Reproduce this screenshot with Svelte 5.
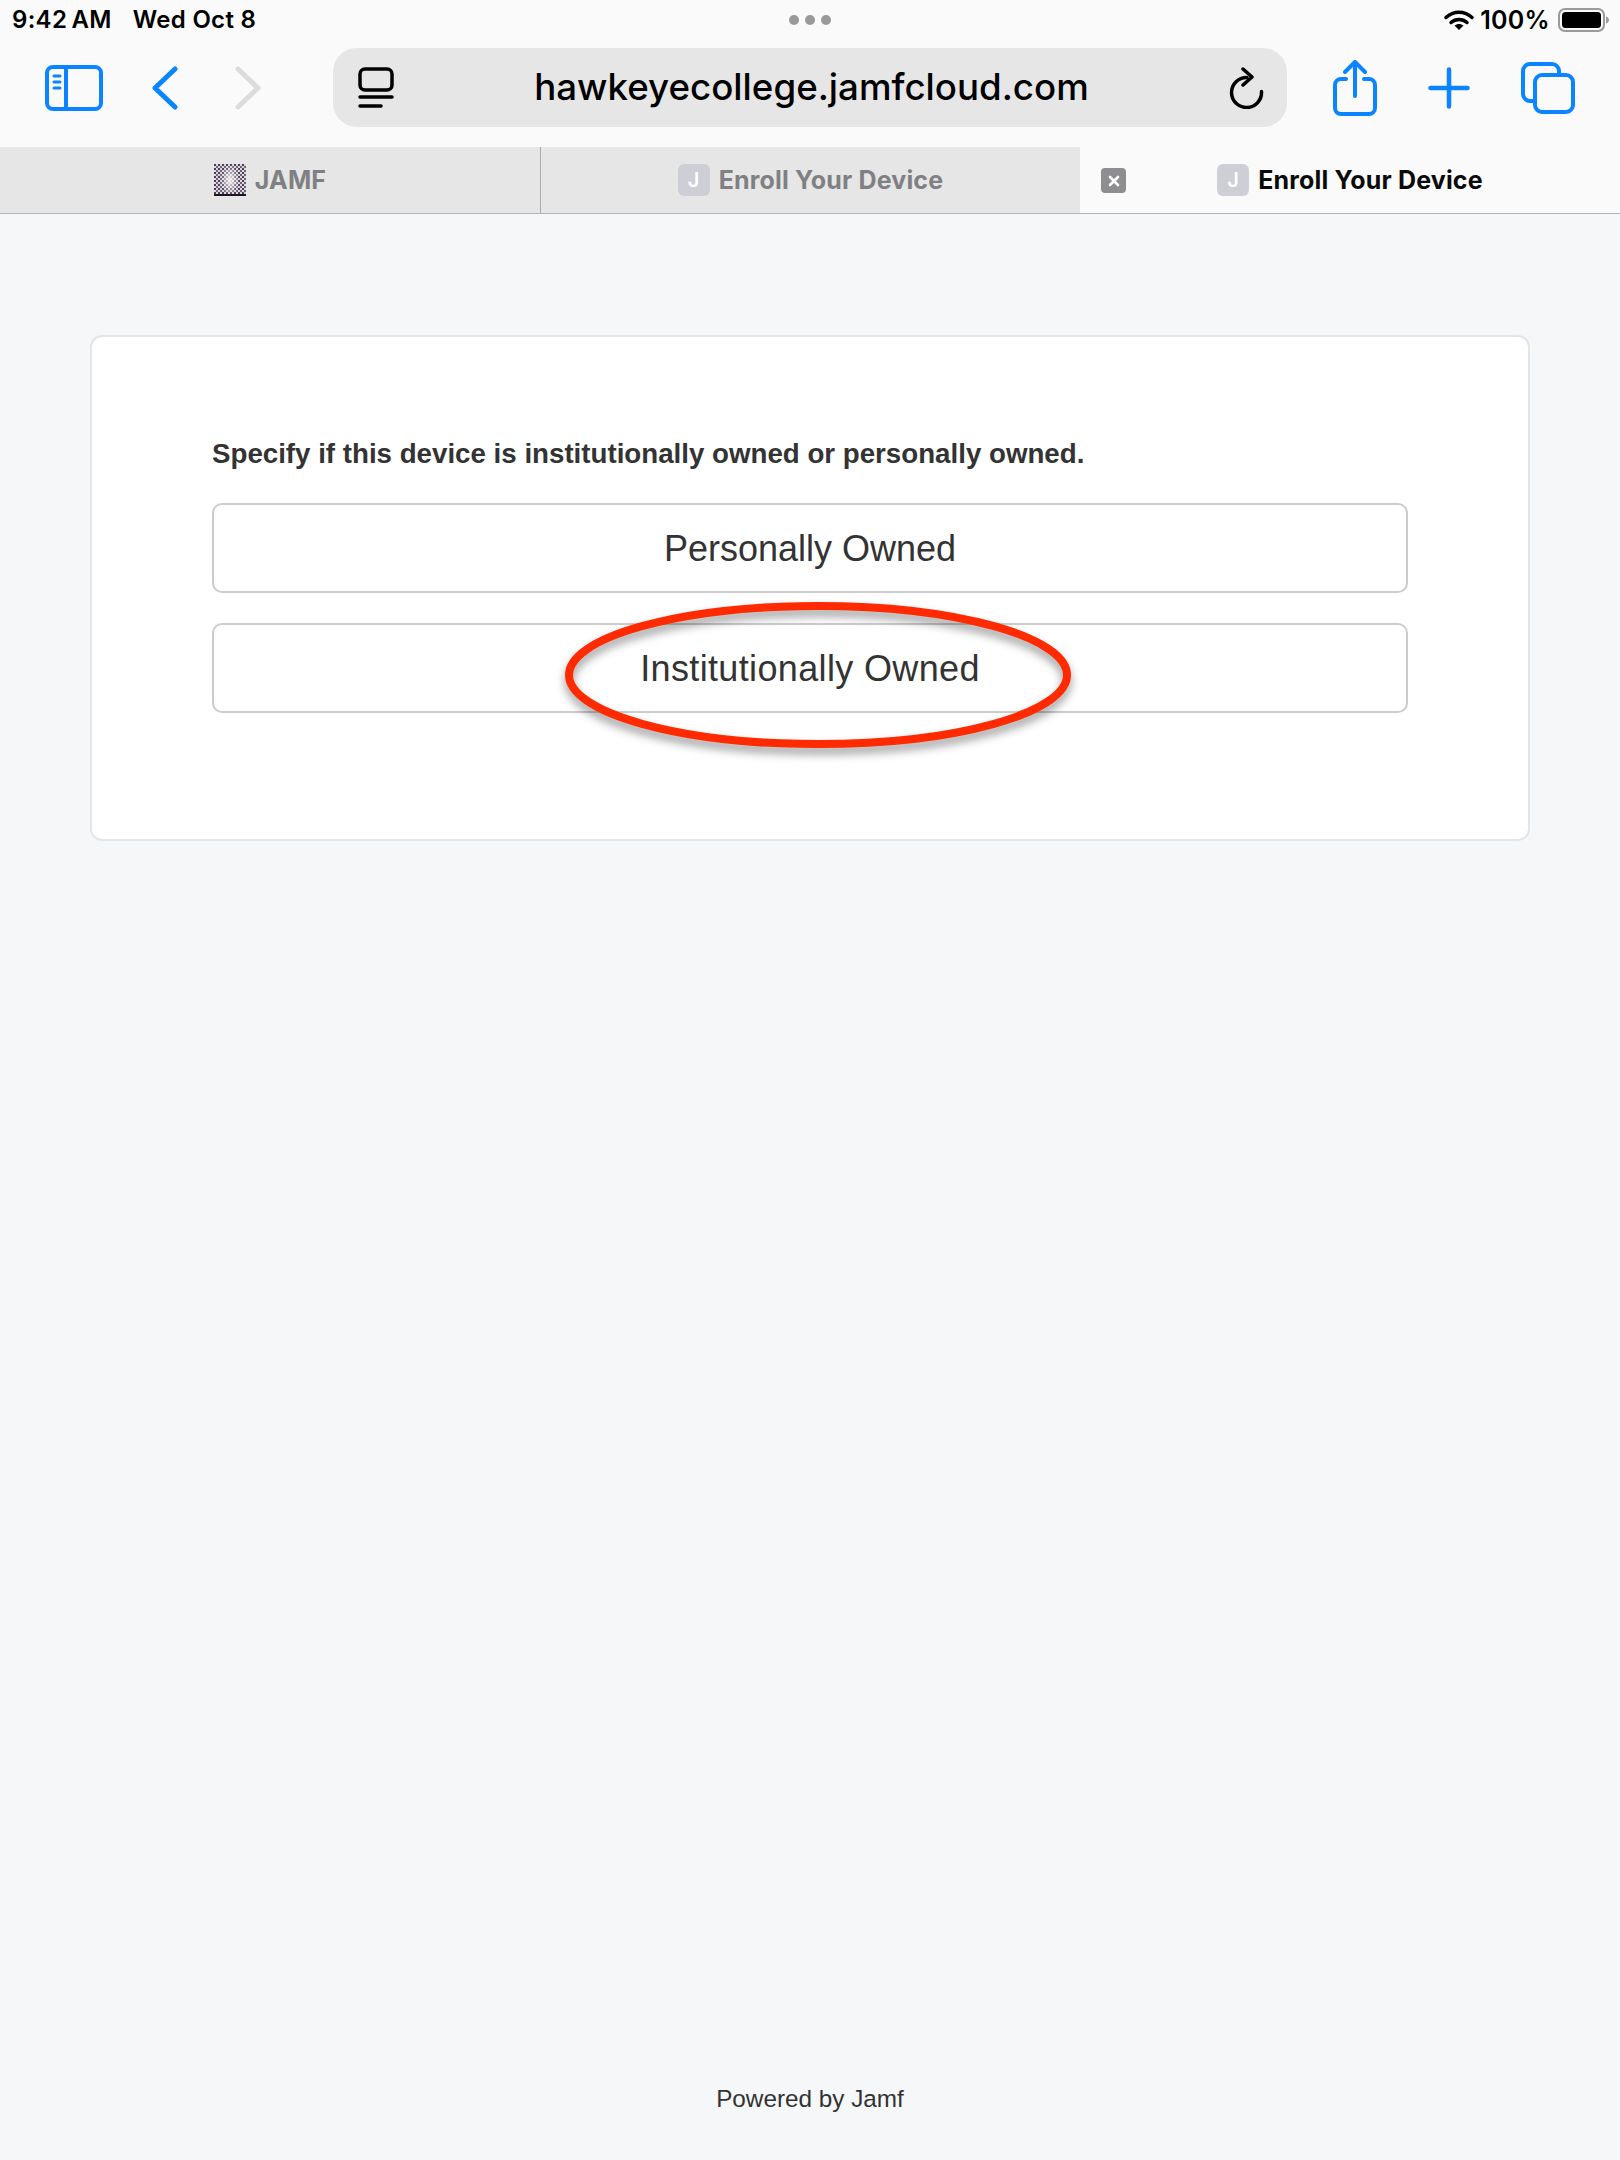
<script>
  const tabs = [
    { title: 'JAMF', icon: 'pattern', active: false },
    { title: 'Enroll Your Device', icon: 'J', active: false },
    { title: 'Enroll Your Device', icon: 'J', active: true }
  ];
</script>

<div class="page">
  <header class="chrome">
    <div class="status">
      <div class="clock"><span>9:42 AM</span><span>Wed Oct 8</span></div>
      <div class="dots"><i></i><i></i><i></i></div>
      <div class="system">
        <svg class="wifi" width="30" height="22" viewBox="0 0 30 22">
          <path d="M2 8.500C9.500 1.500 20.500 1.500 28 8.500" fill="none" stroke="#000" stroke-width="3.400" stroke-linecap="round" />
          <path d="M7 13.500C11.500 9.500 18.500 9.500 23 13.500" fill="none" stroke="#000" stroke-width="3.400" stroke-linecap="round" />
          <path d="M10.500 16.500C13.200 14.400 16.800 14.400 19.500 16.500L15 21z" fill="#000" />
        </svg>
        <span class="percent">100%</span>
        <svg width="52" height="24" viewBox="0 0 52 24">
          <rect x="1" y="1" width="45" height="22" rx="6" fill="none" stroke="#9a9a9a" stroke-width="2" />
          <rect x="4" y="4" width="39" height="16" rx="3.500" fill="#000" />
          <path d="M48 8.500C50 9 51 10.500 51 12C51 13.500 50 15 48 15.500z" fill="#9a9a9a" />
        </svg>
      </div>
    </div>

    <div class="toolbar">
      <div class="left-tools">
        <svg width="58" height="46" viewBox="0 0 58 46" fill="none" stroke="#0a84ff" stroke-width="4">
          <rect x="2" y="2" width="54" height="42" rx="6" />
          <path d="M21 2V44" />
          <path d="M9 11H15M9 17H15M9 23H15" stroke-width="3" stroke-linecap="round" />
        </svg>
        <svg class="back" width="26" height="44" viewBox="0 0 26 44" fill="none" stroke="#0a84ff" stroke-width="5" stroke-linecap="round" stroke-linejoin="round">
          <path d="M23 3L3 22L23 41" />
        </svg>
        <svg class="forward" width="26" height="44" viewBox="0 0 26 44" fill="none" stroke="#dcdcdd" stroke-width="5" stroke-linecap="round" stroke-linejoin="round">
          <path d="M3 3L23 22L3 41" />
        </svg>
      </div>

      <div class="address">
        <svg width="36" height="42" viewBox="0 0 36 42" fill="none" stroke="#000" stroke-width="3.500" stroke-linecap="round">
          <rect x="2" y="2" width="32" height="21" rx="5" />
          <path d="M2 30H34M2 39H23" />
        </svg>
        <span class="url">hawkeyecollege.jamfcloud.com</span>
        <svg width="36" height="42" viewBox="0 0 36 42" fill="none" stroke="#000" stroke-width="3.500" stroke-linecap="round" stroke-linejoin="round">
          <path d="M32.500 24.500A15 15 0 1 1 18 10.500" />
          <path d="M14 2L23 10L14 18" />
        </svg>
      </div>

      <div class="right-tools">
        <svg width="44" height="56" viewBox="0 0 44 56" fill="none" stroke="#0a84ff" stroke-width="4" stroke-linecap="round" stroke-linejoin="round">
          <path d="M13 19H8A6 6 0 0 0 2 25V48A6 6 0 0 0 8 54H36A6 6 0 0 0 42 48V25A6 6 0 0 0 36 19H31" />
          <path d="M22 36V3M12 12L22 2L32 12" />
        </svg>
        <svg width="42" height="42" viewBox="0 0 42 42" fill="none" stroke="#0a84ff" stroke-width="4.500" stroke-linecap="round">
          <path d="M2.500 21H39.500M21 2.500V39.500" />
        </svg>
        <svg width="54" height="52" viewBox="0 0 54 52" fill="none" stroke="#0a84ff" stroke-width="4">
          <path d="M13 39H9A7 7 0 0 1 2 32V9A7 7 0 0 1 9 2H31A7 7 0 0 1 38 9V13" />
          <rect x="14" y="13" width="38" height="37" rx="7" />
        </svg>
      </div>
    </div>

    <nav class="tabs">
      {#each tabs as tab}
        <div class="tab" class:active={tab.active}>
          {#if tab.active}
            <span class="close">
              <svg width="12" height="12" viewBox="0 0 12 12" stroke="#fff" stroke-width="2.600" stroke-linecap="round">
                <path d="M2 2L10 10M10 2L2 10" />
              </svg>
            </span>
          {/if}
          {#if tab.icon === 'J'}
            <span class="favicon">J</span>
          {:else}
            <svg class="noise" width="32" height="32" viewBox="0 0 32 32">
              <defs>
                <pattern id="dither" width="4" height="4" patternUnits="userSpaceOnUse">
                  <rect width="4" height="4" fill="#ddd6e0" />
                  <rect width="2" height="2" fill="#4a3f55" />
                  <rect x="2" y="2" width="2" height="2" fill="#6d6478" />
                </pattern>
                <radialGradient id="glow" cx="0.5" cy="0.5" r="0.5" gradientTransform="translate(0.2 0) scale(0.6 1)">
                  <stop offset="0" stop-color="#f5f1f3" stop-opacity="1" />
                  <stop offset="1" stop-color="#f5f1f3" stop-opacity="0" />
                </radialGradient>
              </defs>
              <rect width="32" height="32" fill="url(#dither)" />
              <rect width="32" height="32" fill="url(#glow)" />
              <rect y="30" width="32" height="2" fill="#1c1620" />
            </svg>
          {/if}
          <span>{tab.title}</span>
        </div>
      {/each}
    </nav>
  </header>

  <main>
    <section class="card">
      <p class="prompt">Specify if this device is institutionally owned or personally owned.</p>
      <button>Personally Owned</button>
      <div class="marked">
        <button>Institutionally Owned</button>
        <svg class="ring" width="520" height="156" viewBox="0 0 520 156">
          <ellipse cx="260" cy="77" rx="249" ry="69" fill="none" stroke="#ff2a00" stroke-width="8" />
        </svg>
      </div>
    </section>
  </main>

  <footer>Powered by Jamf</footer>
</div>

<style>
  :global(body) {
    margin: 0;
    background: #f6f7f9;
  }

  .page {
    display: flex;
    flex-direction: column;
    min-height: 2160px;
    font-family: "Liberation Sans", Arial, sans-serif;
  }

  .chrome {
    background: #fafafb;
    font-family: Inter, "Liberation Sans", sans-serif;
  }

  .status {
    height: 48px;
    display: grid;
    grid-template-columns: 1fr auto 1fr;
    align-items: center;
    padding: 0 10px 9px 10px;
    box-sizing: border-box;
    color: #000;
    font-size: 24px;
    font-weight: 600;
    letter-spacing: 0.3px;
  }

  .clock {
    display: flex;
    gap: 21px;
    padding-left: 2px;
  }

  .clock span:first-child {
    word-spacing: -2px;
  }

  .dots {
    display: flex;
    gap: 6px;
  }

  .dots i {
    width: 10px;
    height: 10px;
    border-radius: 50%;
    background: #999;
  }

  .system {
    display: flex;
    align-items: center;
    justify-content: flex-end;
    gap: 8px;
  }

  .wifi {
    margin-right: -2px;
  }

  .percent {
    font-size: 25px;
  }

  .toolbar {
    height: 99px;
    display: flex;
    align-items: flex-start;
    padding: 0 45px 0 45px;
  }

  .left-tools {
    display: flex;
    align-items: center;
    gap: 49px;
    width: 288px;
    padding-top: 17px;
  }

  .back {
    margin-right: 8px;
  }

  .address {
    width: 954px;
    height: 79px;
    box-sizing: border-box;
    padding: 0 22px 0 25px;
    display: flex;
    align-items: center;
    justify-content: space-between;
    background: #e6e6e7;
    border-radius: 24px;
  }

  .url {
    color: #000;
    font-size: 36.700px;
    font-weight: 500;
    line-height: 76px;
    padding-bottom: 1px;
  }

  .right-tools {
    flex: 1;
    display: flex;
    align-items: center;
    justify-content: space-between;
    padding: 12px 0 0 46px;
  }

  .tabs {
    height: 66px;
    display: grid;
    grid-template-columns: repeat(3, 1fr);
    border-bottom: 1px solid #b4b4b6;
  }

  .tab {
    position: relative;
    display: flex;
    align-items: center;
    justify-content: center;
    gap: 9px;
    background: #e6e6e7;
    color: #808083;
    font-size: 25px;
    font-weight: 700;
    letter-spacing: 0.170px;
  }

  .tab + .tab {
    border-left: 1px solid #adadaf;
  }

  .tab.active {
    background: #fafafb;
    border-left: 0;
    color: #0a0a0a;
  }

  .favicon {
    width: 32px;
    height: 32px;
    display: flex;
    align-items: center;
    justify-content: center;
    border-radius: 6px;
    background: #cdced6;
    color: #fff;
    font-size: 20px;
    font-weight: 600;
  }

  .close {
    position: absolute;
    left: 21px;
    top: 21px;
    width: 25px;
    height: 25px;
    display: flex;
    align-items: center;
    justify-content: center;
    border-radius: 4px;
    background: #8e8e90;
  }

  main {
    padding: 121px 90px 0 90px;
  }

  .card {
    height: 506px;
    box-sizing: border-box;
    padding: 92px 120px 0;
    background: #fff;
    border: 2px solid #e4e5e7;
    border-radius: 12px;
  }

  .prompt {
    margin: 0 0 24px;
    color: #333;
    font-size: 27.700px;
    font-weight: 700;
    line-height: 50px;
  }

  button {
    display: block;
    width: 100%;
    height: 90px;
    padding: 2px 0 0;
    background: #fff;
    border: 2px solid #ccc;
    border-radius: 10px;
    color: #333;
    font-family: inherit;
    font-size: 36px;
  }

  .marked {
    position: relative;
    margin-top: 30px;
  }

  .marked button {
    letter-spacing: 0.350px;
  }

  .ring {
    position: absolute;
    left: 346px;
    top: -25px;
    overflow: visible;
    filter: drop-shadow(0 6px 5px rgba(0, 0, 0, 0.4));
    pointer-events: none;
  }

  footer {
    margin-top: auto;
    padding-bottom: 46px;
    text-align: center;
    color: #333;
    font-size: 24.300px;
    line-height: 30px;
  }
</style>
